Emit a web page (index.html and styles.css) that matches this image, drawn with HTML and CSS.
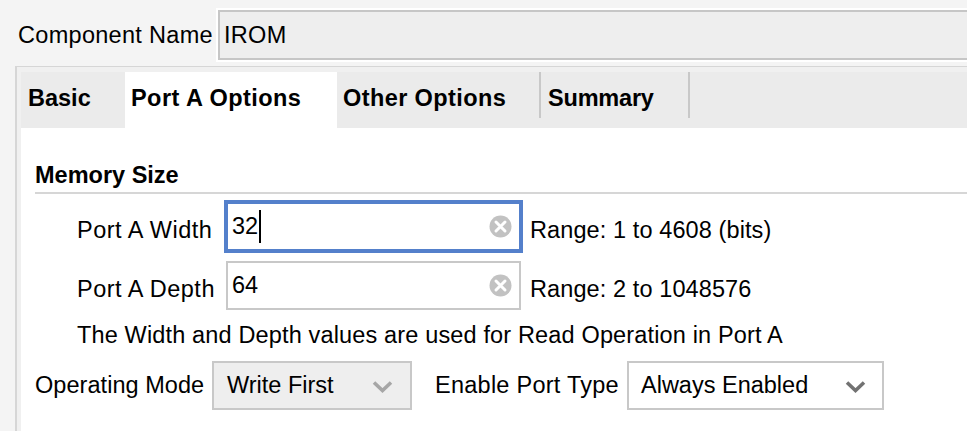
FILE: index.html
```html
<!DOCTYPE html>
<html>
<head>
<meta charset="utf-8">
<link rel="stylesheet" href="styles.css">
</head>
<body>
<div class="name-row">
  <span class="name-label">Component Name</span>
  <div class="name-box"><div class="name-field">IROM</div></div>
</div>
<div class="panel">
  <div class="tabs">
    <div class="tab tab-basic">Basic</div>
    <div class="tab tab-active">Port A Options</div>
    <div class="tab tab-other">Other Options</div>
    <span class="sep"></span>
    <div class="tab tab-summary">Summary</div>
    <span class="sep"></span>
  </div>
  <div class="content">
    <div class="section-title">Memory Size</div>
    <div class="field-row row-first">
      <span class="field-label">Port A Width</span>
      <div class="input focused">
        <span class="value">32<span class="caret"></span></span>
        <svg class="clear" width="23" height="23" viewBox="0 0 23 23"><circle cx="11.5" cy="11.5" r="11" fill="#c2c2c2"/><path d="M7 7 L16 16 M16 7 L7 16" stroke="#fff" stroke-width="3" stroke-linecap="round"/></svg>
      </div>
      <span class="range">Range: 1 to 4608 (bits)</span>
    </div>
    <div class="field-row row-second">
      <span class="field-label">Port A Depth</span>
      <div class="input">
        <span class="value">64</span>
        <svg class="clear" width="23" height="23" viewBox="0 0 23 23"><circle cx="11.5" cy="11.5" r="11" fill="#c2c2c2"/><path d="M7 7 L16 16 M16 7 L7 16" stroke="#fff" stroke-width="3" stroke-linecap="round"/></svg>
      </div>
      <span class="range">Range: 2 to 1048576</span>
    </div>
    <div class="desc">The Width and Depth values are used for Read Operation in Port A</div>
    <div class="mode-row">
      <span class="mode-label">Operating Mode</span>
      <div class="select select-disabled">
        <span>Write First</span>
        <svg class="chev" width="21" height="13" viewBox="0 0 21 13"><polyline points="2,2.5 10.5,10.5 19,2.5" fill="none" stroke="#a6a6a6" stroke-width="3.6"/></svg>
      </div>
      <span class="port-label">Enable Port Type</span>
      <div class="select select-white">
        <span>Always Enabled</span>
        <svg class="chev" width="21" height="13" viewBox="0 0 21 13"><polyline points="2,2.5 10.5,10.5 19,2.5" fill="none" stroke="#727272" stroke-width="3.6"/></svg>
      </div>
    </div>
  </div>
</div>
</body>
</html>
```
FILE: styles.css
```css
html, body {
  height: 431px;
}
body {
  margin: 0;
  background: #f4f4f4;
  font-family: "Liberation Sans", Arial, sans-serif;
  font-size: 23.5px;
  color: #000;
  overflow: hidden;
  display: flex;
  flex-direction: column;
  white-space: nowrap;
}
.name-row {
  display: flex;
  align-items: center;
  padding-top: 8px;
  padding-left: 18px;
}
.name-label {
  flex-shrink: 0;
  width: 198px;
  letter-spacing: 0.3px;
}
.name-box {
  flex: 1;
  margin-right: -20px;
  border: 2px solid #ffffff;
}
.name-field {
  box-sizing: border-box;
  height: 50px;
  border: 2px solid #c6c6c6;
  background: #eeeeee;
  display: flex;
  align-items: center;
  padding-left: 4px;
  letter-spacing: 0.3px;
}
.panel {
  flex: 1;
  margin-top: 4px;
  margin-left: 15px;
  border-top: 1px solid #d6d6d6;
  border-left: 2px solid #d6d6d6;
  background: #f0f0f0;
  padding: 5px 0 0 4px;
  display: flex;
  flex-direction: column;
}
.tabs {
  display: flex;
  height: 56px;
  background: #ebebeb;
  flex-shrink: 0;
}
.tab {
  box-sizing: border-box;
  flex-shrink: 0;
  display: flex;
  align-items: center;
  padding-left: 7px;
  padding-bottom: 3px;
  font-weight: bold;
}
.tab-basic { width: 104px; }
.tab-active { width: 212px; background: #ffffff; padding-left: 6px; letter-spacing: 0.45px; }
.tab-other { width: 202px; padding-left: 6px; letter-spacing: 0.4px; }
.tab-summary { width: 147px; letter-spacing: -0.2px; }
.sep {
  flex-shrink: 0;
  width: 2px;
  height: 46px;
  background: #c8c8c8;
}
.content {
  flex: 1;
  background: #ffffff;
  padding-left: 14px;
}
.section-title {
  margin-top: 32px;
  height: 32px;
  line-height: 30px;
  font-weight: bold;
  border-bottom: 2px solid #d6d6d6;
}
.field-row {
  display: flex;
  align-items: center;
  margin-left: 42px;
}
.row-first { margin-top: 8px; }
.row-second { margin-top: 10px; }
.field-label {
  flex-shrink: 0;
  width: 149px;
  padding-top: 7px;
  letter-spacing: 0.5px;
}
.input {
  flex-shrink: 0;
  box-sizing: border-box;
  width: 295px;
  height: 49px;
  border: 2px solid #c8c8c8;
  background: #ffffff;
  display: flex;
  align-items: center;
  padding-left: 4px;
  padding-right: 7px;
}
.input.focused {
  border-color: #5480cb;
  box-shadow: 0 0 0 2px #5480cb;
}
.value {
  flex: 1;
  display: flex;
  align-items: center;
}
.caret {
  display: inline-block;
  width: 2px;
  height: 33px;
  background: #000;
  margin-left: 1px;
}
.range {
  margin-left: 9px;
  padding-top: 7px;
  letter-spacing: 0.1px;
}
.desc {
  margin-left: 42px;
  margin-top: 10px;
  line-height: 30px;
  letter-spacing: 0.15px;
}
.mode-row {
  display: flex;
  align-items: center;
  margin-top: 11px;
}
.mode-label {
  flex-shrink: 0;
  width: 177px;
  letter-spacing: 0.05px;
}
.select {
  flex-shrink: 0;
  box-sizing: border-box;
  height: 49px;
  border: 2px solid #c8c8c8;
  display: flex;
  align-items: center;
  justify-content: space-between;
}
.select-disabled {
  width: 200px;
  background: #eeeeee;
  padding-left: 13px;
  padding-right: 17px;
}
.port-label {
  flex-shrink: 0;
  margin-left: 23px;
  width: 192px;
  letter-spacing: 0.25px;
}
.select-white {
  width: 257px;
  background: #ffffff;
  padding-left: 12px;
  padding-right: 16px;
}
.chev {
  margin-top: 2px;
}
```
